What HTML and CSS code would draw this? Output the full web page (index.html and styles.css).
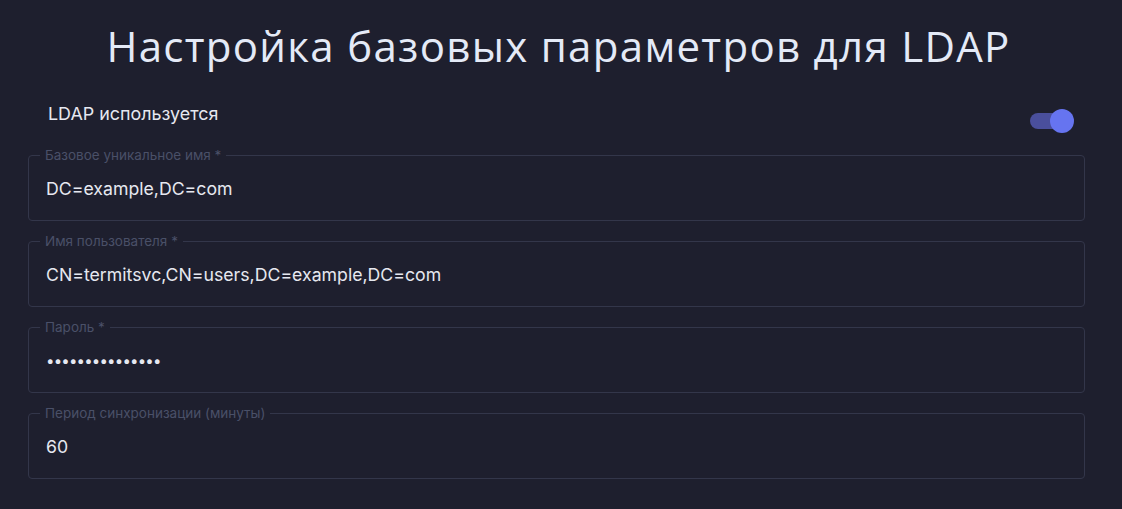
FILE: index.html
```html
<!DOCTYPE html>
<html lang="ru">
<head>
    <meta charset="UTF-8">
    <title>Настройка LDAP</title>
    <link rel="stylesheet" href="styles.css">
</head>
<body>
<div class="container">
    <h1>Настройка базовых параметров для LDAP</h1>

    <div class="switch-row">
        <span class="switch-label">LDAP используется</span>
        <label class="switch">
            <input type="checkbox" checked>
            <span class="track"></span>
            <span class="thumb"></span>
        </label>
    </div>

    <fieldset class="field">
        <legend>Базовое уникальное имя *</legend>
        <input type="text" value="DC=example,DC=com">
    </fieldset>

    <fieldset class="field">
        <legend>Имя пользователя *</legend>
        <input type="text" value="CN=termitsvc,CN=users,DC=example,DC=com">
    </fieldset>

    <fieldset class="field">
        <legend>Пароль *</legend>
        <input type="password" value="secretpassword1">
    </fieldset>

    <fieldset class="field">
        <legend>Период синхронизации (минуты)</legend>
        <input type="text" value="60">
    </fieldset>
</div>
</body>
</html>
```

FILE: styles.css
```css
* {
    box-sizing: border-box;
    margin: 0;
    padding: 0;
}

body {
    background: #1e1f2e;
    font-family: Inter, Roboto, sans-serif;
    color: #e6e8f0;
}

.container {
    padding: 20px 37px 0 28px;
}

h1 {
    text-align: center;
    font-family: 'Open Sans', sans-serif;
    font-weight: 400;
    font-size: 42px;
    line-height: 52px;
    color: #e4eaf7;
    letter-spacing: 1.3px;
    padding-left: 4px;
}

.switch-row {
    display: flex;
    justify-content: space-between;
    align-items: flex-start;
    height: 76px;
    padding: 32px 11px 0 20px;
}

.switch-label {
    font-size: 17.9px;
    line-height: 20px;
    color: #e6e8f0;
}

.switch {
    position: relative;
    display: block;
    width: 44px;
    height: 24px;
    margin-top: 5px;
}

.switch input {
    display: none;
}

.track {
    position: absolute;
    left: 0;
    top: 4px;
    width: 32px;
    height: 16px;
    border-radius: 8px;
    background: #4a4f9c;
}

.thumb {
    position: absolute;
    right: 0;
    top: 0;
    width: 24px;
    height: 24px;
    border-radius: 50%;
    background: #6674f0;
}

.field {
    border: 1px solid #33364a;
    border-radius: 4px;
    padding: 0 17px 6px 17px;
    margin-top: 13px;
}

.field:first-of-type {
    margin-top: 0;
}

.field legend {
    font-size: 13.5px;
    line-height: 14px;
    color: #4a5068;
    padding: 0 5px;
    margin-left: -6px;
}

.field input {
    display: block;
    width: 100%;
    height: 52px;
    background: transparent;
    border: none;
    outline: none;
    font-family: Inter, Roboto, sans-serif;
    font-size: 17.7px;
    color: #e6e8f0;
}

.field input[type="password"] {
    font-size: 15px;
    letter-spacing: -0.8px;
}
```
